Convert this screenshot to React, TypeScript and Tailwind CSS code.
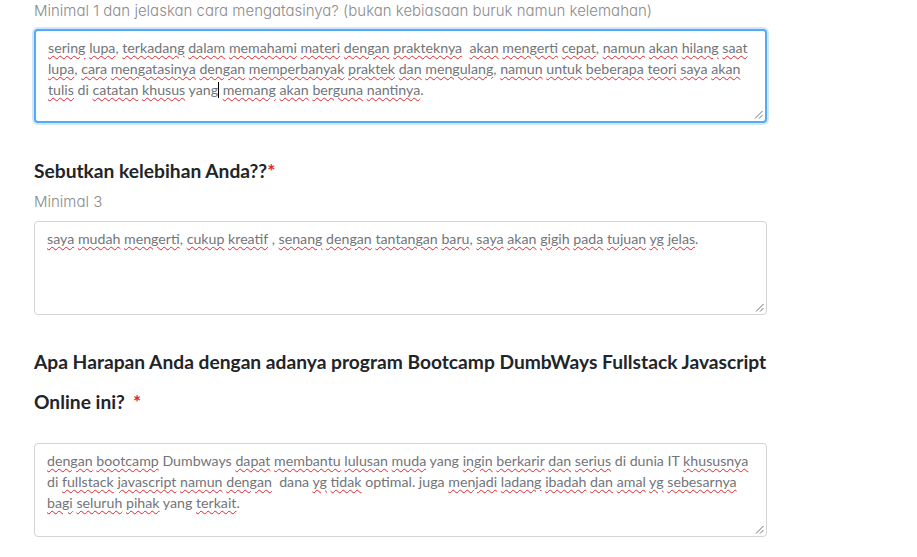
import React from 'react';

const bodyFont = "font-['Lato','Noto_Sans',sans-serif]";
const subFont = "font-['Inter','Noto_Sans',sans-serif]";

const renderLine = (line: string, key: number) => {
  const parts = line.split(/(\[[^\]]+\]|\|)/g).filter((p) => p !== '');
  return (
    <div key={key} className="whitespace-pre">
      {parts.map((p, i) => {
        if (p === '|') {
          return <span key={i} className="inline-block w-px h-[16px] bg-black align-[-3px]" />;
        }
        if (p.startsWith('[')) {
          return (
            <span
              key={i}
              className="underline decoration-wavy decoration-[#e0242b] decoration-1 underline-offset-[2px]"
            >
              {p.slice(1, -1)}
            </span>
          );
        }
        return <span key={i}>{p}</span>;
      })}
    </div>
  );
};

const Grip = () => (
  <svg className="absolute right-[2px] bottom-[2px]" width="9" height="9" viewBox="0 0 9 9">
    <line x1="8.5" y1="1" x2="1" y2="8.5" stroke="#6f6f6f" strokeWidth="1" />
    <line x1="8.5" y1="5" x2="5" y2="8.5" stroke="#6f6f6f" strokeWidth="1" />
  </svg>
);

const FakeTextarea: React.FC<{ lines: string[]; focused?: boolean }> = ({ lines, focused }) => (
  <div
    className={`relative h-[94px] w-[733px] rounded-[4px] bg-white px-[12px] py-[6px] text-[14.2px] leading-[21px] text-[#727579] ${bodyFont} ${
      focused
        ? 'border-2 border-[#55aaf6] px-[11px] py-[5px] shadow-[0_0_0_2px_rgba(120,185,250,0.35)]'
        : 'border border-[#d4d4d4]'
    }`}
  >
    {lines.map(renderLine)}
    <Grip />
  </div>
);

const Required = ({ gap }: { gap?: boolean }) => (
  <span className={`text-[#ec1c2b] ${gap ? 'ml-[8px]' : ''}`}>*</span>
);

export default function App() {
  return (
    <div className="min-h-screen w-[917px] bg-white pl-[34px]">
      <p className={`h-[21px] text-[15px] leading-[21px] font-light text-[#8b8b8b] ${subFont} [font-feature-settings:'cv11']`}>
        Minimal 1 dan jelaskan cara mengatasinya? (bukan kebiasaan buruk namun kelemahan)
      </p>

      <div className="mt-[8px]">
        <FakeTextarea
          focused
          lines={[
            '[sering] [lupa], [terkadang] [dalam] [memahami] [materi] [dengan] [prakteknya]  [akan] [mengerti] [cepat], [namun] [akan] [hilang] [saat]',
            '[lupa], [cara] [mengatasinya] [dengan] [memperbanyak] [praktek] [dan] [mengulang], [namun] [untuk] [beberapa] [teori] [saya] [akan]',
            '[tulis] di [catatan] [khusus] yang| [memang] [akan] [berguna] [nantinya].',
          ]}
        />
      </div>

      <h3 className={`mt-[28px] text-[19.2px] leading-[40px] font-bold text-[#212529] ${bodyFont}`}>
        Sebutkan kelebihan Anda??<Required />
      </h3>
      <p className={`text-[15px] leading-[21px] font-light text-[#8b8b8b] ${subFont} [font-feature-settings:'cv11']`}>
        Minimal 3
      </p>

      <div className="mt-[9px]">
        <FakeTextarea
          lines={[
            '[saya] [mudah] [mengerti], [cukup] [kreatif] , [senang] [dengan] [tantangan] [baru], [saya] [akan] [gigih] [pada] [tujuan] [yg] [jelas].',
          ]}
        />
      </div>

      <h3 className={`mt-[27px] w-[745px] text-[19.2px] leading-[40px] font-bold text-[#212529] ${bodyFont}`}>
        <span className="block">Apa Harapan Anda dengan adanya program Bootcamp DumbWays Fullstack Javascript</span>
        <span className="block">
          Online ini?
          <Required gap />
        </span>
      </h3>

      <div className="mt-[21px]">
        <FakeTextarea
          lines={[
            '[dengan] [bootcamp] Dumbways [dapat] [membantu] [lulusan] [muda] yang [ingin] [berkarir] [dan] [serius] di dunia IT [khususnya]',
            'di [fullstack] [javascript] [namun] [dengan]  dana [yg] [tidak] optimal. juga [menjadi] [ladang] [ibadah] [dan] [amal] [yg] [sebesarnya]',
            '[bagi] [seluruh] [pihak] yang [terkait].',
          ]}
        />
      </div>
    </div>
  );
}
